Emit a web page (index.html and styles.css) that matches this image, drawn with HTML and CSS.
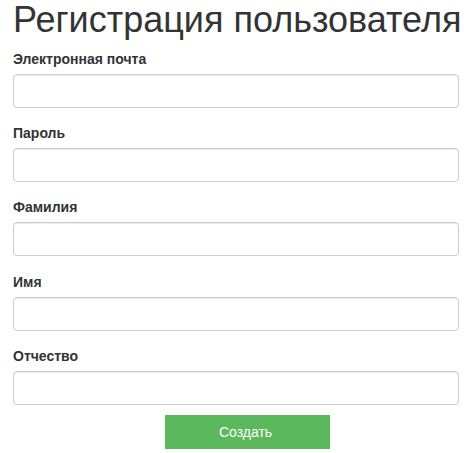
FILE: index.html
```html
<!DOCTYPE html>
<html lang="ru">
<head>
<meta charset="utf-8">
<title>Регистрация пользователя</title>
<link rel="stylesheet" href="styles.css">
</head>
<body>
<div class="page">
  <h1 class="title">Регистрация пользователя</h1>
  <form class="form">
    <div class="group">
      <label class="label">Электронная почта</label>
      <input class="input" type="text">
    </div>
    <div class="group">
      <label class="label">Пароль</label>
      <input class="input" type="password">
    </div>
    <div class="group">
      <label class="label">Фамилия</label>
      <input class="input" type="text">
    </div>
    <div class="group">
      <label class="label">Имя</label>
      <input class="input" type="text">
    </div>
    <div class="group last">
      <label class="label">Отчество</label>
      <input class="input" type="text">
    </div>
    <div class="actions">
      <button class="btn" type="button">Создать</button>
    </div>
  </form>
</div>
</body>
</html>
```
FILE: styles.css
```css
html, body {
  margin: 0;
  padding: 0;
  background: #fff;
}
body {
  font-family: "Liberation Sans", Arial, sans-serif;
  font-size: 14px;
  line-height: 20px;
  color: #333;
}
.page {
  padding: 0 5px 0 13px;
}
.title {
  margin: 0 0 9.5px 0;
  font-size: 36px;
  font-weight: 500;
  line-height: 39.6px;
  color: #333;
  white-space: nowrap;
}
.form {
  display: flex;
  flex-direction: column;
}
.group {
  display: flex;
  flex-direction: column;
  margin-bottom: 15.2px;
}
.group.last {
  margin-bottom: 10.5px;
}
.label {
  font-weight: bold;
  margin-bottom: 5px;
}
.input {
  box-sizing: border-box;
  height: 34px;
  width: 100%;
  margin: 0;
  padding: 6px 12px;
  border: 1px solid #ccc;
  border-radius: 4px;
  box-shadow: inset 0 1px 1px rgba(0,0,0,.075);
  background: #fff;
  font: inherit;
}
.actions {
  display: flex;
  padding-left: 152px;
}
.btn {
  width: 165px;
  height: 34px;
  border: 0;
  border-radius: 0;
  background: #5cb85c;
  color: #fff;
  font-family: "Liberation Sans", Arial, sans-serif;
  font-size: 14px;
  padding: 0;
  padding-right: 4px;
}
```
